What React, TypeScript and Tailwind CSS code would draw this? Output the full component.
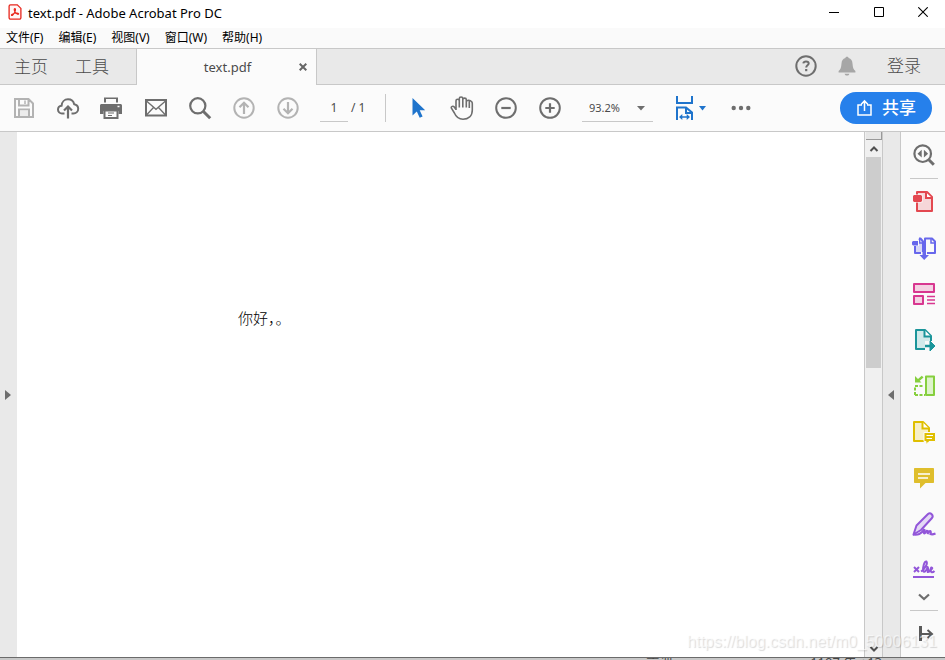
import React, { useState } from "react";

type IconProps = { children: React.ReactNode; size?: number; className?: string };

function Icon({ children, size = 24, className = "" }: IconProps) {
  return (
    <svg
      width={size}
      height={size}
      viewBox={`0 0 ${size} ${size}`}
      fill="none"
      stroke="currentColor"
      strokeWidth="2"
      className={`shrink-0 ${className}`}
      aria-hidden="true"
    >
      {children}
    </svg>
  );
}

function ToolButton({ label, className = "text-[#6e6e6e]", children }: { label: string; className?: string; children: React.ReactNode }) {
  return (
    <button type="button" aria-label={label} className={`flex h-full w-11 shrink-0 items-center justify-center ${className}`}>
      <Icon>{children}</Icon>
    </button>
  );
}

function SideButton({ label, className = "", children }: { label: string; className?: string; children: React.ReactNode }) {
  return (
    <button type="button" aria-label={label} className={`flex h-[46px] w-full shrink-0 items-center justify-center pl-0.5 ${className}`}>
      <Icon>{children}</Icon>
    </button>
  );
}

function TitleBar() {
  return (
    <header className="flex h-7 shrink-0 items-center bg-white pl-2">
      <svg width="14" height="16" viewBox="0 0 14 16" fill="none" stroke="#e8261c" className="-mt-1" aria-hidden="true">
        <path d="M2.5.8h6.8l3.6 3.6v9.3a1.5 1.5 0 0 1-1.5 1.5H2.6a1.5 1.5 0 0 1-1.5-1.5V2.3A1.5 1.5 0 0 1 2.5.8z" strokeWidth="1.3" fill="#fff5f4" />
        <path d="M6.8 4.6c-.9 0-.7 1.700.2 3.100.9 1.500 2.400 2.800 3.300 2.600.9-.3.2-1.300-1.300-1.300-2 0-4.300.7-5.200 1.500-.8.7-.2 1.300.5.9C5.300 10.800 7.800 6.800 7.500 5.300c-.1-.5-.4-.7-.7-.7z" strokeWidth="1.100" />
      </svg>
      <h1 className="ml-1.5 grow pb-0.5 text-[13px] leading-4 whitespace-nowrap text-black">text.pdf - Adobe Acrobat Pro DC</h1>
      <div className="flex h-full pb-1">
        <button type="button" aria-label="最小化" className="flex w-[45px] items-center justify-center">
          <svg width="10" height="10" viewBox="0 0 10 10" stroke="#000"><path d="M0 5.500h10" /></svg>
        </button>
        <button type="button" aria-label="最大化" className="flex w-[45px] items-center justify-center">
          <svg width="10" height="10" viewBox="0 0 10 10" stroke="#000" fill="none"><path d="M.5.5h9v9h-9z" /></svg>
        </button>
        <button type="button" aria-label="关闭" className="flex w-11 items-center justify-center">
          <svg width="10" height="10" viewBox="0 0 10 10" stroke="#000"><path d="M.3.3l9.400 9.400M9.700.3L.3 9.700" strokeWidth="1.100" /></svg>
        </button>
      </div>
    </header>
  );
}

function MenuBar() {
  return (
    <nav className="flex h-5 shrink-0 items-center gap-[15px] bg-[#fafafa] pl-1.5 text-[12px] leading-4 text-black">
      {["文件(F)", "编辑(E)", "视图(V)", "窗口(W)", "帮助(H)"].map((m) => (
        <button key={m} type="button" className="whitespace-nowrap">{m}</button>
      ))}
    </nav>
  );
}

function TabBar() {
  return (
    <div className="flex h-[37px] shrink-0 border-t border-[#c8c8c8] bg-[#e9e9e9] text-[#4b4b4b]">
      <div className="flex w-[137px] shrink-0 items-center gap-[27px] border-r border-b border-[#c8c8c8] pl-3.5 text-[17px] leading-6 font-light">
        <button type="button">主页</button>
        <button type="button">工具</button>
      </div>
      <div className="flex w-[179px] shrink-0 items-center bg-[#fbfbfb]">
        <button type="button" className="grow pl-5 text-center text-[13px] leading-5 text-[#4b4b4b]">text.pdf</button>
        <button type="button" aria-label="关闭标签" className="mr-2 shrink-0 p-px">
          <svg width="8" height="8" viewBox="0 0 8 8" stroke="#666" strokeWidth="2"><path d="M.7.7l6.600 6.600M7.300.7L.7 7.300" /></svg>
        </button>
      </div>
      <div className="flex grow items-center justify-end border-b border-l border-[#c8c8c8] pr-6 pb-0.5">
        <button type="button" aria-label="帮助" className="text-[#6e6e6e]">
          <Icon size={22}>
            <circle cx="11" cy="11" r="9.700" />
            <path d="M8.300 8.400c.3-1.500 1.400-2 2.700-2 1.600 0 2.700.8 2.700 2.100 0 1.800-2.500 1.900-2.500 3.900" />
            <path d="M11.200 14v2.200" strokeWidth="2.200" />
          </Icon>
        </button>
        <button type="button" aria-label="通知" className="ml-5 text-[#a6a6a6]">
          <Icon size={20}>
            <path d="M10 .8c.9 0 1.500.5 1.600 1.300 2.600.8 3.700 2.700 3.900 5.300.3 4.200.9 6 2.900 7.700v1.500H1.600v-1.500c2-1.700 2.600-3.500 2.900-7.700.2-2.600 1.300-4.500 3.900-5.300C8.500 1.300 9.100.8 10 .8zM7.600 17.700h4.800c-.3 1.200-1.200 1.900-2.400 1.900s-2.100-.7-2.400-1.900z" fill="currentColor" stroke="none" />
          </Icon>
        </button>
        <button type="button" className="ml-[30px] text-[17px] leading-6 font-light">登录</button>
      </div>
    </div>
  );
}

function Toolbar() {
  const [page, setPage] = useState("1");
  return (
    <div className="flex h-[47px] shrink-0 items-center border-b border-[#c8c8c8] bg-[#fbfbfb] pr-[13px] pl-0.5 text-[#4b4b4b]">
      <ToolButton label="保存" className="text-[#b3b3b3]">
        <path d="M3 3h13.500L21 7.500V21H3zM7 3v6.500h9.500V4M7 21v-7.500h10V21" />
        <path d="M13 4.500v3.500" strokeWidth="1.500" />
        <path d="M8 14.500h8v5.500H8z" fill="#ececec" stroke="none" />
      </ToolButton>
      <ToolButton label="上传">
        <path d="M8.500 17.500H6c-2.300 0-4-1.700-4-3.900 0-2.100 1.500-3.700 3.600-3.900C5.800 6 8.500 3.300 12 3.300c3.200 0 5.500 1.900 6.200 4.900 2.300.4 4 2.200 4 4.500 0 2.700-2.100 4.800-4.700 4.800h-2" />
        <path d="M12 22.500V11M8 14.500l4-4 4 4" strokeWidth="2.200" />
      </ToolButton>
      <ToolButton label="打印">
        <path d="M4 1.500h14v5H4zM1.500 8h19c.8 0 1.500.7 1.500 1.500V18h-3.500v-3h-15v3H0V9.500C0 8.700.7 8 1.500 8z" fill="currentColor" stroke="none" />
        <path d="M6 3h10v4H6z" fill="#fbfbfb" stroke="none" />
        <path d="M4.500 14.500h13V22h-13z" fill="#fbfbfb" />
        <path d="M8 17h6M8 19.500h4" strokeWidth="1.200" />
        <path d="M17.500 10.500h2" stroke="#fbfbfb" strokeWidth="1.500" />
      </ToolButton>
      <ToolButton label="电子邮件">
        <path d="M2 4h20v15.500H2z" />
        <path d="M2.500 5l9.500 8.300L21.500 5M2.500 19l7-7.500M21.500 19l-7-7.500" strokeWidth="1.300" />
      </ToolButton>
      <ToolButton label="查找">
        <circle cx="9.800" cy="9.800" r="7.600" strokeWidth="2.200" />
        <path d="M15.200 15.200l7 7" strokeWidth="3" />
      </ToolButton>
      <ToolButton label="上一页" className="text-[#b3b3b3]">
        <circle cx="12" cy="12" r="9.700" />
        <path d="M12 18V7M7.500 11.200L12 6.700l4.500 4.500" strokeWidth="2.200" />
      </ToolButton>
      <ToolButton label="下一页" className="text-[#b3b3b3]">
        <circle cx="12" cy="12" r="9.700" />
        <path d="M12 6v11M7.500 12.800l4.500 4.500 4.500-4.500" strokeWidth="2.200" />
      </ToolButton>
      <input
        aria-label="页码"
        value={page}
        onChange={(e) => setPage(e.target.value)}
        className="ml-2.5 h-7 w-7 shrink-0 border-b border-[#c8c8c8] bg-transparent text-center text-[12px] leading-4 outline-none"
      />
      <span className="ml-[3px] w-[34px] shrink-0 text-[12px] leading-4 whitespace-nowrap">/ 1</span>
      <span className="mr-2.5 h-7 w-px shrink-0 bg-[#c8c8c8]" />
      <ToolButton label="选择" className="text-[#1f74cc]">
        <path d="M6.500 2v17.500l4.300-4.100 2.900 6.400 2.900-1.300-2.900-6.300h5.500z" fill="currentColor" stroke="none" />
      </ToolButton>
      <ToolButton label="手形工具">
        <path
          d="M6 14V4.700c0-1.900 3.300-1.900 3.300 0V11.500M9.300 5V2.500c0-2 3.500-2 3.500 0v9M12.800 3.500c0-1.900 3.500-1.900 3.500 0v8M16.300 6c.2-1.900 3.400-2.600 5.400-.3.500.6.600 1.200.6 2V14c0 6-4 9.200-9.300 9.200-4.600 0-6.900-2.200-8.600-6.200L1.400 12.200c-.6-1.800 1.700-2.700 2.900-1.100L6 13.500M19.300 5v7"
          strokeWidth="1.600"
          strokeLinejoin="round"
        />
      </ToolButton>
      <ToolButton label="缩小">
        <circle cx="12" cy="12" r="9.800" />
        <path d="M7.300 12h9.400" strokeWidth="2.200" />
      </ToolButton>
      <ToolButton label="放大">
        <circle cx="12" cy="12" r="9.800" />
        <path d="M7.300 12h9.400M12 7.300v9.400" strokeWidth="2.200" />
      </ToolButton>
      <div className="relative ml-2.5 h-7 w-[71px] shrink-0 border-b border-[#c8c8c8]">
        <select aria-label="缩放" defaultValue="93.2%" className="h-full w-full appearance-none bg-transparent pl-[7px] text-[11px] leading-4 outline-none">
          <option>93.2%</option>
        </select>
        <svg width="8" height="5" viewBox="0 0 8 5" className="pointer-events-none absolute top-3 right-2" aria-hidden="true"><path d="M0 0h8L4 4.500z" fill="#6e6e6e" /></svg>
      </div>
      <button type="button" aria-label="适合宽度" className="ml-5 flex shrink-0 items-center text-[#1f74cc]">
        <Icon>
          <path d="M4 0v7h15V0M4 24V11.500h9l6 5V24M13 11.500V17h6" />
          <path d="M7 21h9" strokeWidth="1.500" />
          <path d="M9.300 18v6L6 21zM13.700 18v6l3.300-3z" fill="currentColor" stroke="none" />
        </Icon>
        <svg width="7" height="5" viewBox="0 0 7 5" className="ml-0.5"><path d="M0 0h7L3.500 4.500z" fill="currentColor" /></svg>
      </button>
      <button type="button" aria-label="更多工具" className="ml-[23px] shrink-0 text-[#6e6e6e]">
        <Icon>
          <circle cx="4.700" cy="12" r="2.200" fill="currentColor" stroke="none" />
          <circle cx="12" cy="12" r="2.200" fill="currentColor" stroke="none" />
          <circle cx="19.300" cy="12" r="2.200" fill="currentColor" stroke="none" />
        </Icon>
      </button>
      <button type="button" className="ml-auto flex h-8 w-[92px] shrink-0 items-center gap-2 rounded-full bg-[#2680eb] pl-4 text-[17px] leading-6 font-medium text-white">
        <Icon size={18} className="-mt-px">
          <path d="M6 6H2v10h13V6h-4M8.500 12V2.500M5.200 5.200l3.300-3.300 3.300 3.300" strokeWidth="1.500" />
        </Icon>
        共享
      </button>
    </div>
  );
}

function ToolsPane() {
  return (
    <aside className="flex w-[45px] shrink-0 flex-col items-center border-l border-[#c8c8c8] bg-[#fafafa]">
      <SideButton label="搜索工具" className="text-[#6e6e6e]">
        <circle cx="10.700" cy="10.700" r="8.300" strokeWidth="2.200" />
        <path d="M16.800 16.800l5 5" strokeWidth="3" />
        <path d="M9.700 6.800v7.800L5.500 10.700zM11.900 6.800v7.800l4.200-3.900z" fill="currentColor" stroke="none" />
      </SideButton>
      <span className="ml-0.5 h-px w-7 shrink-0 bg-[#c8c8c8]" />
      <SideButton label="创建 PDF" className="text-[#e34850]">
        <path d="M5 2h10l5 5v14H5z" fill="#f6d6d8" strokeLinejoin="round" />
        <path d="M14 2.500V8h6" fill="#fff" />
        <path d="M3.500 8.500H10.500" stroke="#fafafa" strokeWidth="8" />
        <path d="M2 5h7l1 1v5l-1 1H2l-1-1V6z" fill="currentColor" stroke="none" />
      </SideButton>
      <SideButton label="合并文件" className="text-[#6767ec]">
        <path d="M3 9v8h8V5.500L8.500 2.500H7" fill="#d9d9f6" strokeLinejoin="round" />
        <path d="M13 17V2.500h7l3 3V17z" fill="#fafafa" strokeLinejoin="round" />
        <path d="M19 3v4h4M7.500 2.500V7H11" strokeWidth="1.500" />
        <path d="M0 7h7" stroke="#fafafa" strokeWidth="6" />
        <path d="M1 5h5v4.500H1L0 8.500V6z" fill="currentColor" stroke="none" />
        <path d="M9 16h6v3h-6z" fill="#fafafa" stroke="none" />
        <path d="M10.500 15h3.500v4h3L12.200 24 7.500 19h3z" fill="currentColor" stroke="none" />
      </SideButton>
      <SideButton label="组织页面" className="text-[#d83790]">
        <path d="M2 2h20v8H2zM2 14h9v8H2z" fill="#f4d2e3" strokeLinejoin="round" />
        <path d="M15 14.500h8M15 18h8M15 21.500h8" strokeWidth="1.300" />
      </SideButton>
      <SideButton label="导出 PDF" className="text-[#1b959a]">
        <path d="M4 2h9l6 6v13H4z" fill="#d2eaea" strokeLinejoin="round" />
        <path d="M12.500 2v6.500H19" fill="#fff" />
        <path d="M13 17.500h9" stroke="#fafafa" strokeWidth="9" />
        <path d="M13 18h6" strokeWidth="2.500" />
        <path d="M18 13l5 5-5 5z" fill="currentColor" strokeWidth="1" />
      </SideButton>
      <SideButton label="扫描和 OCR" className="text-[#86cf3e]">
        <path d="M14 2.500h8v18.500h-8z" fill="#def3cc" strokeLinejoin="round" />
        <path d="M3 21V12h9M3 21h10" strokeDasharray="3 1.500" />
        <path d="M3 2v6.500h6.500L7.700 6.700l3.800-3.200L9.800 1.800 6 5z" fill="currentColor" stroke="none" />
      </SideButton>
      <SideButton label="发送以供注释" className="text-[#dfbf00]">
        <path d="M2 2h9l6 6v13H2z" fill="#f6efc9" strokeLinejoin="round" />
        <path d="M10.500 2v6.500H17" fill="#fff" />
        <path d="M12 12.500h11.500v9H17L14 24.500v-3h-2z" fill="currentColor" stroke="#fafafa" strokeWidth="1" />
        <path d="M14.500 15.500H21M14.500 18.500H20" stroke="#fff" strokeWidth="1.200" />
      </SideButton>
      <SideButton label="注释" className="text-[#dfbe2c]">
        <path d="M3 2h18c.6 0 1 .4 1 1v13c0 .6-.4 1-1 1h-7.500L8 22.500V17H3c-.6 0-1-.4-1-1V3c0-.6.4-1 1-1z" fill="currentColor" stroke="none" />
        <path d="M6 8h12M6 12h10" stroke="#fff" strokeWidth="1.500" />
      </SideButton>
      <SideButton label="填写和签名" className="text-[#9256d9]">
        <path d="M1.500 22.500l3-9L16 2c2.500-2 6 1.300 4 4L9 18z" fill="#e4d8f5" strokeLinejoin="round" />
        <path d="M1 22.500c5 .5 8 0 11.500-5.500-1 4.500-.5 6 1.500 2.500 1-1.500 2.500-.5 1.500 2.500 1.500-3.500 4-4 3 0 1.500.7 3 .3 5-.5" strokeWidth="2.200" />
      </SideButton>
      <button type="button" aria-label="签名" className="flex h-11 w-full shrink-0 items-center justify-center pl-0.5 text-[#9256d9]">
        <Icon>
          <path d="M1 20h21" />
          <path d="M2 10l5 5M7 10l-5 5" />
          <path d="M9 14.500c4-2.500 7-8 5.500-10-2.200-.8-4 6.500-3.300 9.500.9 2.500 4-1 4.300-4 .5 0 1.500 5-.5 5 2.500.5 3.500-1.500 4-4 .5-1 1.800 0 1 .8-1.500.3-1.500 3.200-.3 3.400 1.200.2 2-.4 2.800-1.200" />
        </Icon>
      </button>
      <button type="button" aria-label="更多" className="flex h-3 w-full shrink-0 items-center justify-center pl-0.5 text-[#6e6e6e]">
        <Icon size={12}><path d="M1 3.500L6 8l5-4.500" strokeWidth="2.200" /></Icon>
      </button>
      <span className="mt-[7px] ml-0.5 h-px w-7 shrink-0 bg-[#c8c8c8]" />
      <SideButton label="展开窗格" className="text-[#5a5a5a]">
        <path d="M8.500 4v15" strokeWidth="3" />
        <path d="M10 12h10M15.500 8l4.500 4-4.500 4" />
      </SideButton>
    </aside>
  );
}

function Scrollbar() {
  return (
    <div className="flex w-[19px] shrink-0 flex-col border-x border-[#c8c8c8] bg-[#f0f0f0] pl-px">
      <div className="h-2 w-full shrink-0 border-r border-b border-[#999] bg-[#e6e6e6]" />
      <button type="button" aria-label="向上滚动" className="flex h-[17px] shrink-0 items-center justify-center text-[#505050]">
        <Icon size={10}><path d="M1.500 7L5 3.500 8.500 7" /></Icon>
      </button>
      <div className="grow">
        <div className="h-[43.6%] w-[15px] bg-[#cdcdcd]" />
      </div>
      <button type="button" aria-label="向下滚动" className="flex h-[17px] shrink-0 items-center justify-center text-[#505050]">
        <Icon size={10}><path d="M1.500 3L5 6.500 8.500 3" /></Icon>
      </button>
    </div>
  );
}

export default function App() {
  return (
    <div className="relative flex h-screen flex-col overflow-hidden bg-[#fbfbfb] font-['Noto_Sans','Noto_Sans_CJK_SC',sans-serif]">
      <TitleBar />
      <MenuBar />
      <TabBar />
      <Toolbar />
      <div className="flex min-h-0 grow">
        <button type="button" aria-label="展开导览窗格" className="flex w-[17px] shrink-0 items-center bg-[#e9e9e9] pl-[5px]">
          <svg width="6" height="10" viewBox="0 0 6 10"><path d="M0 0l6 5-6 5z" fill="#6e6e6e" /></svg>
        </button>
        <main className="min-w-0 grow bg-white pt-[175px] pl-[221px]">
          <p className="font-['Liberation_Serif','Noto_Sans_CJK_SC',serif] text-[15px] leading-6 font-light whitespace-nowrap text-black">你好，。</p>
        </main>
        <Scrollbar />
        <button type="button" aria-label="折叠工具窗格" className="flex w-[17px] shrink-0 items-center bg-[#e9e9e9] pl-[5px]">
          <svg width="6" height="10" viewBox="0 0 6 10"><path d="M6 0L0 5l6 5z" fill="#6e6e6e" /></svg>
        </button>
        <ToolsPane />
      </div>
      <footer className="flex h-[3px] shrink-0 justify-end gap-[138px] overflow-hidden border-t border-[#6b6b6b] bg-[#c8c8c8] pr-[63px] text-[13px] leading-2 text-[#444]">
        <span>言训</span>
        <span>1107 年 +13</span>
      </footer>
      <p className="pointer-events-none absolute right-2 bottom-2 font-['Liberation_Sans',sans-serif] text-[16px] leading-5 text-white/60 [text-shadow:1px_1px_1px_rgba(0,0,0,0.15)]">
        https://blog.csdn.net/m0_50006131
      </p>
    </div>
  );
}
